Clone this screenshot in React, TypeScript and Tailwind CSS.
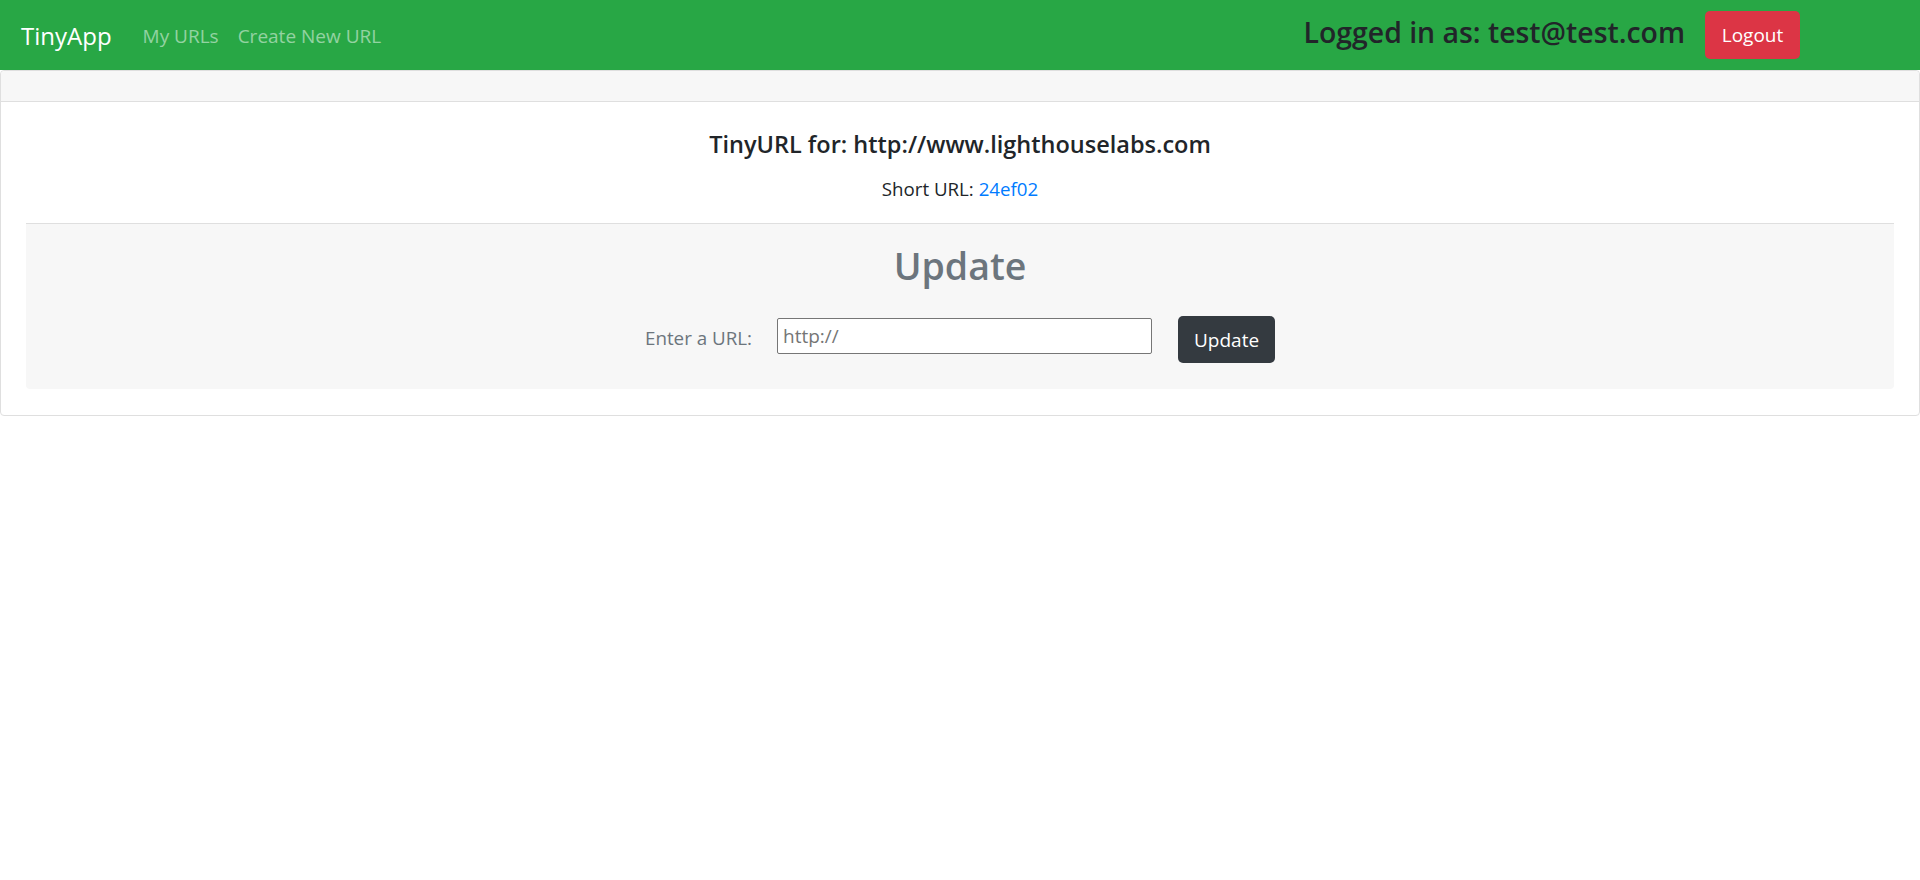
import React from "react";

export default function App() {
  const font = { fontFamily: '"Open Sans", "Noto Sans", sans-serif' };
  return (
    <div className="min-h-[880px] bg-white text-[#212529]" style={font}>
      <nav className="flex h-[70px] items-center bg-[#28a745] pl-[21px]">
        <span className="mt-[2px] text-[24px] leading-[32px] text-white">TinyApp</span>
        <a className="ml-[31px] mt-[2px] text-[19px] leading-[28px] text-white/50">My URLs</a>
        <a className="ml-[19px] mt-[2px] text-[19px] leading-[28px] text-white/50">Create New URL</a>
        <div className="ml-auto mr-[120px] flex items-center">
          <span className="-mt-[7px] text-[28.4px] font-semibold leading-[38px] text-[#212529]">Logged in as: test@test.com</span>
          <button className="ml-[20px] h-[48px] w-[95px] rounded-[5px] bg-[#dc3545] text-[19px] leading-[30px] text-white">Logout</button>
        </div>
      </nav>
      <div className="rounded-[4px] border border-[#dfdfdf]">
        <div className="h-[31px] rounded-t-[4px] border-b border-[#dfdfdf] bg-[#f7f7f7]" />
        <div className="px-[25px] pb-[26px] pt-[28px]">
          <h4 className="text-center text-[23.5px] font-semibold leading-[29px] text-[#212529]">
            TinyURL for: http://www.lighthouselabs.com
          </h4>
          <p className="mt-[18px] text-center text-[18.7px] leading-[24px] text-[#212529]">
            Short URL: <a className="text-[#007bff]">24ef02</a>
          </p>
          <div className="mt-[22px] rounded-b-[4px] border-t border-[#dfdfdf] bg-[#f7f7f7] pb-[26px] pt-[18px]">
            <h1 className="text-center text-[37.5px] font-semibold leading-[48px] text-[#6c757d]">Update</h1>
            <div className="mt-[26px] flex items-start justify-center">
              <label className="mt-[10px] text-[18.8px] leading-[24px] text-[#6c757d]">Enter a URL:</label>
              <input
                className="ml-[25px] mt-[2px] h-[36px] w-[375px] rounded-[2px] border border-[#767676] bg-white px-[5px] text-[19px] text-[#212529] placeholder:text-[#757575] outline-none"
                placeholder="http://"
                type="text"
              />
              <button className="ml-[26px] h-[47px] w-[97px] rounded-[5px] bg-[#343a40] text-[19px] leading-[30px] text-white">Update</button>
            </div>
          </div>
        </div>
      </div>
    </div>
  );
}
